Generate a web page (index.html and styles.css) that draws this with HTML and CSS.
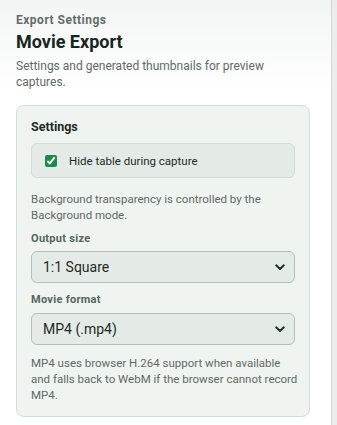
FILE: index.html
```html
<!DOCTYPE html>
<html>
<head>
    <title>Movie Export</title>
    <link rel="stylesheet" href="styles.css">
</head>
<body>
    <div class="panel">
        <div class="eyebrow">Export Settings</div>
        <h2>Movie Export</h2>
        <p class="lead">Settings and generated thumbnails for preview captures.</p>

        <div class="card">
            <h3>Settings</h3>

            <label class="check-row">
                <input type="checkbox" checked />
                <span>Hide table during capture</span>
            </label>

            <p class="help">Background transparency is controlled by the Background mode.</p>

            <label class="field-label" for="outputSize">Output size</label>
            <div class="select-wrap">
                <select id="outputSize">
                    <option>1:1 Square</option>
                    <option>16:9 Wide</option>
                    <option>9:16 Portrait</option>
                </select>
                <svg class="chevron" width="10" height="7" viewBox="0 0 10 7"><path d="M1.2 1.3 L5 5 L8.8 1.3" fill="none" stroke="#1d2b24" stroke-width="1.9" stroke-linecap="round" stroke-linejoin="round"/></svg>
            </div>

            <label class="field-label second" for="movieFormat">Movie format</label>
            <div class="select-wrap">
                <select id="movieFormat">
                    <option>MP4 (.mp4)</option>
                    <option>WebM (.webm)</option>
                </select>
                <svg class="chevron" width="10" height="7" viewBox="0 0 10 7"><path d="M1.2 1.3 L5 5 L8.8 1.3" fill="none" stroke="#1d2b24" stroke-width="1.9" stroke-linecap="round" stroke-linejoin="round"/></svg>
            </div>

            <p class="help last">MP4 uses browser H.264 support when available and falls back to WebM if the browser cannot record MP4.</p>
        </div>
    </div>
</body>
</html>
```

FILE: styles.css
```css
body {
    font-family: Roboto, "Noto Sans", Arial, sans-serif;
    background: #ececec;
    margin: 0;
    padding: 0;
    color: #1d2b24;
}

.panel {
    width: 332px;
    height: 425px;
    box-sizing: border-box;
    padding: 12px 21px 0 16px;
    background: linear-gradient(#f3f4f4, #ffffff 90px);
    border-right: 1px solid #d6d6d6;
    overflow: hidden;
}

.eyebrow {
    font-size: 12px;
    font-weight: 700;
    letter-spacing: 0.5px;
    color: #5f6e66;
    line-height: 16px;
}

h2 {
    margin: 3px 0 0;
    font-size: 18px;
    font-weight: 700;
    line-height: 22px;
    color: #17261e;
}

.lead {
    margin: 5px 0 0;
    font-size: 12px;
    line-height: 16px;
    color: #5e6b64;
}

.card {
    margin-top: 15px;
    background: #eff4f1;
    border: 1px solid #d3ddd7;
    border-radius: 8px;
    padding: 13px 14px 13px 14px;
}

h3 {
    margin: 0;
    font-size: 12.5px;
    font-weight: 700;
    line-height: 16px;
    color: #1d2b24;
}

.check-row {
    display: flex;
    align-items: center;
    gap: 12px;
    margin-top: 8px;
    height: 35px;
    box-sizing: border-box;
    padding: 0 13px;
    background: #e4ebe6;
    border: 1px solid #d2dbd5;
    border-radius: 6px;
    font-size: 11.5px;
    color: #1d2b24;
}

    .check-row input {
        margin: 0;
        width: 12px;
        height: 12px;
        accent-color: #1e8a4b;
    }

.help {
    margin: 13px 0 0;
    font-size: 11.5px;
    line-height: 16px;
    color: #5e6b64;
}

    .help.last {
        margin: 10px -4px 0 0;
    }

.field-label {
    display: block;
    margin-top: 9px;
    font-size: 11px;
    font-weight: 700;
    letter-spacing: 0.3px;
    line-height: 14px;
    color: #56655d;
}

    .field-label.second {
        margin-top: 10px;
    }

.select-wrap {
    position: relative;
    margin-top: 5px;
}

    .field-label.second + .select-wrap {
        margin-top: 6px;
    }

    .select-wrap select {
        display: block;
        width: 100%;
        height: 32px;
        box-sizing: border-box;
        padding: 0 30px 0 11px;
        appearance: none;
        -webkit-appearance: none;
        background: #e4ebe6;
        border: 1px solid #b4c1b8;
        border-radius: 6px;
        font-family: inherit;
        font-size: 14px;
        color: #1d2b24;
    }

    .select-wrap .chevron {
        position: absolute;
        right: 10px;
        top: 13px;
        pointer-events: none;
    }
```
